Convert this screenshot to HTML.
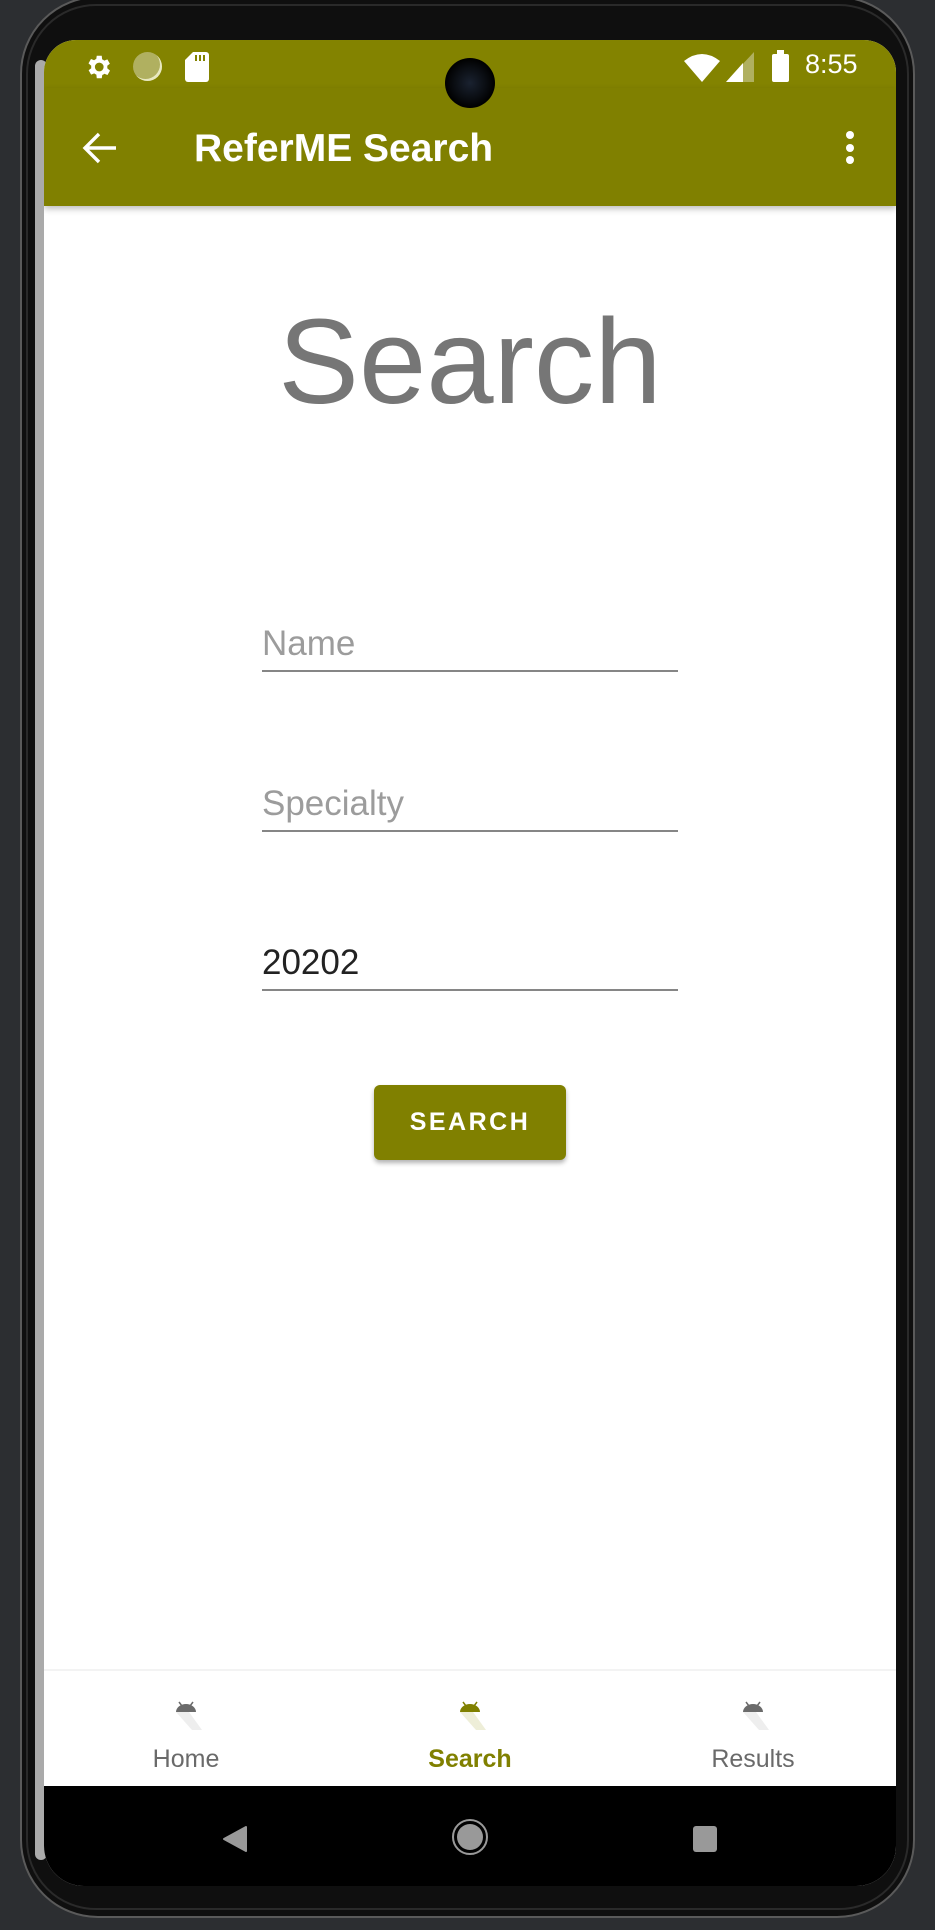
<!DOCTYPE html>
<html><head><meta charset="utf-8"><style>
html,body{margin:0;padding:0;width:935px;height:1930px;overflow:hidden;background:#2c2e31;font-family:"Liberation Sans",sans-serif}
.frame{position:absolute;left:20px;top:-4px;width:895px;height:1922px;border-radius:78px;background:#0f0f0f;border:2px solid #5a5a5a;box-sizing:border-box}
.frame2{position:absolute;left:26px;top:4px;width:883px;height:1906px;border-radius:70px;border:2px solid #2a2a2a;box-sizing:border-box}
.greyband{position:absolute;left:35px;top:60px;width:12px;height:1800px;background:#aaa;border-radius:10px}
.screen{position:absolute;left:44px;top:40px;width:852px;height:1846px;border-radius:32px 32px 40px 40px;overflow:hidden;background:#fff}
.status{position:absolute;left:0;top:0;width:852px;height:48px;background:#838300}
.appbar{position:absolute;left:0;top:48px;width:852px;height:118px;background:#808000;box-shadow:0 3px 6px rgba(0,0,0,.25)}
.t{position:absolute;white-space:nowrap}
.line{position:absolute;left:218px;width:416px;height:2px;background:#868686}
.nav{position:absolute;left:0;top:1629px;width:852px;height:117px;background:#fff;border-top:2px solid #f3f3f3}
.sys{position:absolute;left:0;top:1746px;width:852px;height:100px;background:#000}
.lbl{position:absolute;top:1705px;font-size:25px;color:#6a6a6a;width:200px;text-align:center}
</style></head><body>
<div class="frame"></div><div class="frame2"></div>
<div class="greyband"></div>
<div class="screen">
 <div class="status"></div>
 <div class="appbar"></div>
 <svg class="t" style="left:39px;top:12px" width="30" height="30" viewBox="0 0 24 24"><path fill="#fff" d="M19.4 13a7.5 7.5 0 000-2l2.1-1.6-2-3.5-2.5 1a7 7 0 00-1.7-1L15 3h-4l-.4 2.6a7 7 0 00-1.7 1l-2.5-1-2 3.5L6.6 11a7.5 7.5 0 000 2l-2.1 1.6 2 3.5 2.5-1a7 7 0 001.7 1L11 21h4l.4-2.6a7 7 0 001.7-1l2.5 1 2-3.5zM13 15.5a3.5 3.5 0 110-7 3.5 3.5 0 010 7z"/></svg>
 <div class="t" style="left:89px;top:12px;width:29px;height:29px;border-radius:50%;background:#b0b060;box-shadow:inset -2px -2px 0 #e8e8c0"></div>
 <svg class="t" style="left:141px;top:12px" width="24" height="30" viewBox="0 0 24 30"><path fill="#fff" d="M8 0h13a3 3 0 013 3v24a3 3 0 01-3 3H3a3 3 0 01-3-3V8z"/><path fill="#838300" d="M10 3h2v6h-2zM14 3h2v6h-2zM18 3h2v6h-2z"/></svg>
 <div class="t" style="left:401px;top:18px;width:50px;height:50px;border-radius:50%;background:radial-gradient(circle at 50% 50%,#1a2230 0,#0a0d12 45%,#000 70%)"></div>
 <svg class="t" style="left:640px;top:12px" width="36" height="30" viewBox="0 0 36 30"><path fill="#fff" d="M0 9Q18-5 36 9L18 30z"/></svg>
 <svg class="t" style="left:682px;top:12px" width="28" height="30" viewBox="0 0 28 30"><path fill="#b0b060" d="M28 0V30H0z"/><path fill="#fff" d="M17 11V30H0z"/></svg>
 <div class="t" style="left:728px;top:14px;width:17px;height:28px;background:#fff;border-radius:2px"></div>
 <div class="t" style="left:733px;top:10px;width:7px;height:4px;background:#fff"></div>
 <div class="t" style="left:761px;top:9px;font-size:27px;color:#fff">8:55</div>
 <svg class="t" style="left:38px;top:91px" width="36" height="34" viewBox="0 0 36 34"><path d="M34 17H3M17 3L3 17l14 14" stroke="#fff" stroke-width="3.4" fill="none"/></svg>
 <div class="t" style="left:150px;top:87px;font-size:39px;font-weight:bold;color:#fff">ReferME Search</div>
 <div class="t" style="left:802px;top:91px;width:8px;height:8px;border-radius:50%;background:#fff"></div>
 <div class="t" style="left:802px;top:104px;width:8px;height:8px;border-radius:50%;background:#fff"></div>
 <div class="t" style="left:802px;top:116px;width:8px;height:8px;border-radius:50%;background:#fff"></div>
 <div class="t" style="left:0;width:852px;text-align:center;top:249px;font-size:121px;color:#767676;line-height:1.2">Search</div>
 <div class="t" style="left:218px;top:584px;font-size:35px;color:#9c9c9c">Name</div>
 <div class="line" style="top:630px"></div>
 <div class="t" style="left:218px;top:744px;font-size:35px;color:#9c9c9c">Specialty</div>
 <div class="line" style="top:790px"></div>
 <div class="t" style="left:218px;top:903px;font-size:35px;color:#222">20202</div>
 <div class="line" style="top:949px"></div>
 <div class="t" style="left:330px;top:1045px;width:192px;height:75px;background:#808000;border-radius:6px;box-shadow:0 3px 5px rgba(0,0,0,.3);color:#fff;font-size:25px;font-weight:bold;letter-spacing:2.5px;text-align:center;line-height:75px">SEARCH</div>
 <div class="nav"></div>
 <svg class="t" style="left:131px;top:1660px" width="30" height="32" viewBox="0 0 30 32"><path d="M1 12L17 30h10L14 12z" fill="#eee"/><path d="M1 12a10 8 0 0120 0z" fill="#6b6b6b"/><path d="M4 2l3 4M18 2l-3 4" stroke="#6b6b6b" stroke-width="1.5"/></svg>
 <svg class="t" style="left:415px;top:1660px" width="30" height="32" viewBox="0 0 30 32"><path d="M1 12L17 30h10L14 12z" fill="#eeeed8"/><path d="M1 12a10 8 0 0120 0z" fill="#808000"/><path d="M4 2l3 4M18 2l-3 4" stroke="#808000" stroke-width="1.5"/></svg>
 <svg class="t" style="left:698px;top:1660px" width="30" height="32" viewBox="0 0 30 32"><path d="M1 12L17 30h10L14 12z" fill="#eee"/><path d="M1 12a10 8 0 0120 0z" fill="#6b6b6b"/><path d="M4 2l3 4M18 2l-3 4" stroke="#6b6b6b" stroke-width="1.5"/></svg>
 <div class="lbl" style="left:42px">Home</div>
 <div class="lbl" style="left:326px;color:#808000;font-weight:bold">Search</div>
 <div class="lbl" style="left:609px">Results</div>
 <div class="sys"></div>
 <svg class="t" style="left:178px;top:1785px" width="26" height="28" viewBox="0 0 26 28"><path d="M24 2L2 14l22 12z" fill="#999" stroke="#999" stroke-width="2" stroke-linejoin="round"/></svg>
 <div class="t" style="left:408px;top:1779px;width:36px;height:36px;border-radius:50%;border:2px solid #999;box-sizing:border-box;background:#000"></div>
 <div class="t" style="left:413px;top:1784px;width:26px;height:26px;border-radius:50%;background:#999"></div>
 <div class="t" style="left:649px;top:1786px;width:24px;height:26px;border-radius:3px;background:#999"></div>
</div>
</body></html>
